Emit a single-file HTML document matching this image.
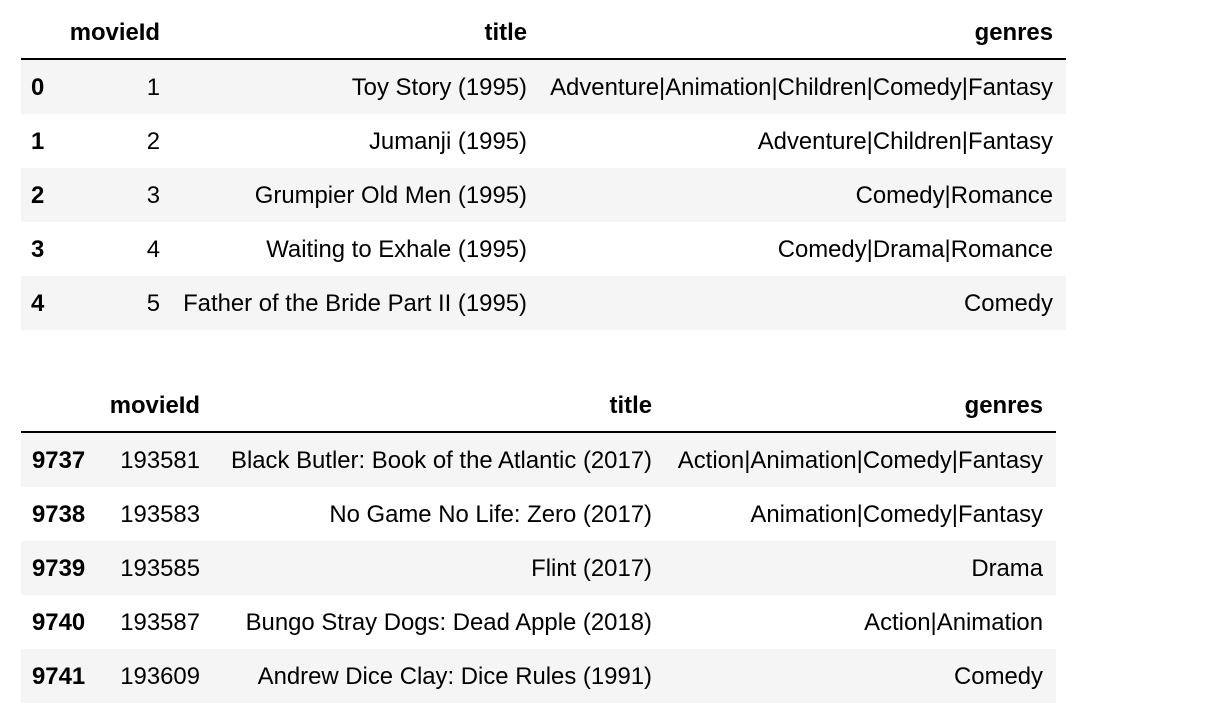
<!DOCTYPE html>
<html><head><style>
body{margin:0;background:#fff;width:1226px;height:720px;position:relative;overflow:hidden;font-family:"Liberation Sans",Arial,sans-serif;font-size:23.9px;color:#000}
.r{position:absolute;height:54px}
.g{background:#f5f5f5}
.t{position:absolute;white-space:nowrap;line-height:54px;top:1px}
.b{font-weight:bold}
.line{position:absolute;height:2px;background:#000}
</style></head><body>
<div class="line" style="left:21px;top:58px;width:1045px"></div>
<div class="line" style="left:21px;top:431px;width:1035px"></div>
<script>
function tbl(top,left,width,cols,idx,rows){
 let h='';
 h+=`<div class="r" style="top:${top}px;left:${left}px;width:${width}px">`;
 ['movieId','title','genres'].forEach((s,i)=>h+=`<div class="t b" style="right:${width-(cols[i]-left)}px">${s}</div>`);
 h+='</div>';
 rows.forEach((r,k)=>{
  let y=top+55+k*54;
  h+=`<div class="r ${k%2==0?'g':''}" style="top:${y}px;left:${left}px;width:${width}px">`;
  h+=`<div class="t b" style="left:${idx-left}px">${r[0]}</div>`;
  for(let i=1;i<4;i++)h+=`<div class="t" style="right:${width-(cols[i-1]-left)}px">${r[i]}</div>`;
  h+='</div>';
 });
 document.body.insertAdjacentHTML('beforeend',h);
}
tbl(5,21,1045,[160,527,1053],31,[
['0','1','Toy Story (1995)','Adventure|Animation|Children|Comedy|Fantasy'],
['1','2','Jumanji (1995)','Adventure|Children|Fantasy'],
['2','3','Grumpier Old Men (1995)','Comedy|Romance'],
['3','4','Waiting to Exhale (1995)','Comedy|Drama|Romance'],
['4','5','Father of the Bride Part II (1995)','Comedy']]);
tbl(378,21,1035,[200,652,1043],32,[
['9737','193581','Black Butler: Book of the Atlantic (2017)','Action|Animation|Comedy|Fantasy'],
['9738','193583','No Game No Life: Zero (2017)','Animation|Comedy|Fantasy'],
['9739','193585','Flint (2017)','Drama'],
['9740','193587','Bungo Stray Dogs: Dead Apple (2018)','Action|Animation'],
['9741','193609','Andrew Dice Clay: Dice Rules (1991)','Comedy']]);
</script>
</body></html>
